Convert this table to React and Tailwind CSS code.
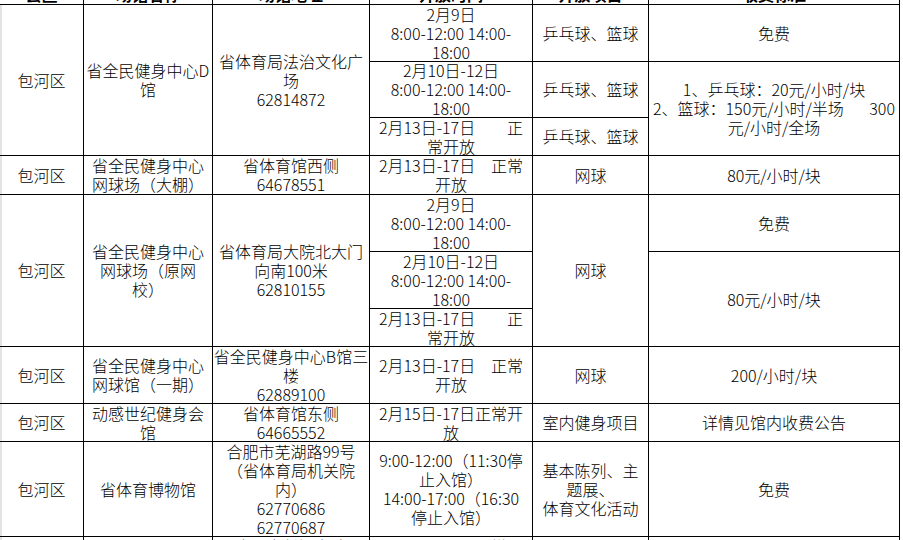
import React from 'react';

const font = { fontFamily: '"Noto Sans CJK SC", "Noto Sans", sans-serif' };

// a line that is pushed to both cell edges (Excel wrapped text with spaces)
const Spread = ({ left, right, pad = 'px-[9px]' }) => (
  <div className={`flex w-full justify-between whitespace-nowrap ${pad}`}>
    <span>{left}</span>
    <span>{right}</span>
  </div>
);

const Cell = ({ className = '', lines = [], top = false }) => (
  <div
    className={`flex flex-col items-center overflow-hidden bg-white text-center text-[16px] font-light leading-[19px] text-black ${
      top ? 'justify-start' : 'justify-center'
    } ${className}`}
  >
    {lines.map((l, i) =>
      typeof l === 'string' ? (
        <div key={i} className="whitespace-pre">
          {l}
        </div>
      ) : (
        <React.Fragment key={i}>{l}</React.Fragment>
      )
    )}
  </div>
);

const T1 = ['2月9日', '8:00-12:00 14:00-', '18:00'];
const T2 = ['2月10日-12日', '8:00-12:00 14:00-', '18:00'];
const T3 = [<Spread left="2月13日-17日" right="正" />, '常开放'];
const T4 = [<Spread left="2月13日-17日" right="正常" />, '开放'];

// first column shows the sheet's faint gridline at its left edge
const first = 'col-start-1 shadow-[inset_2px_0_0_#e3e3e3]';

export default function App() {
  return (
    <div className="h-[540px] w-[903px] overflow-hidden bg-white" style={font}>
      <div className="-mt-[20px] grid w-fit grid-cols-[83px_128px_156px_162px_115px_250px] grid-rows-[24px_56px_55px_37px_38px_56px_56px_37px_56px_37px_94px_100px] gap-px bg-black pr-px">
        {/* header, mostly scrolled out of view */}
        {['县区', '场馆名称', '场馆地址', '开放时间', '开放项目', '收费标准'].map((h, i) => (
          <div
            key={h}
            className="row-start-1 flex items-end justify-center bg-white text-[16px] font-bold leading-[19px] text-black"
            style={{ gridColumnStart: i + 1 }}
          >
            {h}
          </div>
        ))}

        {/* 省全民健身中心D馆 */}
        <Cell className={`${first} row-start-2 row-span-3`} lines={['包河区']} />
        <Cell className="col-start-2 row-start-2 row-span-3" lines={['省全民健身中心D', '馆']} />
        <Cell className="col-start-3 row-start-2 row-span-3" lines={['省体育局法治文化广', '场', '62814872']} />
        <Cell className="col-start-4 row-start-2" lines={T1} />
        <Cell className="col-start-4 row-start-3" lines={T2} />
        <Cell className="col-start-4 row-start-4" lines={T3} />
        <Cell className="col-start-5 row-start-2" lines={['乒乓球、篮球']} />
        <Cell className="col-start-5 row-start-3" lines={['乒乓球、篮球']} />
        <Cell className="col-start-5 row-start-4" lines={['乒乓球、篮球']} />
        <Cell className="col-start-6 row-start-2" lines={['免费']} />
        <Cell
          className="col-start-6 row-start-3 row-span-2"
          lines={['1、乒乓球：20元/小时/块', <Spread left="2、篮球：150元/小时/半场" right="300" pad="px-[4px]" />, '元/小时/全场']}
        />

        {/* 网球场（大棚） */}
        <Cell className={`${first} row-start-5`} lines={['包河区']} />
        <Cell className="col-start-2 row-start-5" lines={['省全民健身中心', '网球场（大棚）']} />
        <Cell className="col-start-3 row-start-5" lines={['省体育馆西侧', '64678551']} />
        <Cell className="col-start-4 row-start-5" lines={T4} />
        <Cell className="col-start-5 row-start-5" lines={['网球']} />
        <Cell className="col-start-6 row-start-5" lines={['80元/小时/块']} />

        {/* 网球场（原网校） */}
        <Cell className={`${first} row-start-6 row-span-3`} lines={['包河区']} />
        <Cell className="col-start-2 row-start-6 row-span-3" lines={['省全民健身中心', '网球场（原网', '校）']} />
        <Cell className="col-start-3 row-start-6 row-span-3" lines={['省体育局大院北大门', '向南100米', '62810155']} />
        <Cell className="col-start-4 row-start-6" lines={T1} />
        <Cell className="col-start-4 row-start-7" lines={T2} />
        <Cell className="col-start-4 row-start-8" lines={T3} />
        <Cell className="col-start-5 row-start-6 row-span-3" lines={['网球']} />
        <Cell className="col-start-6 row-start-6" lines={['免费']} />
        <Cell className="col-start-6 row-start-7 row-span-2" lines={['80元/小时/块']} />

        {/* 网球馆（一期） */}
        <Cell className={`${first} row-start-9`} lines={['包河区']} />
        <Cell className="col-start-2 row-start-9" lines={['省全民健身中心', '网球馆（一期）']} />
        <Cell className="col-start-3 row-start-9" lines={['省全民健身中心B馆三', '楼', '62889100']} />
        <Cell className="col-start-4 row-start-9" lines={T4} />
        <Cell className="col-start-5 row-start-9" lines={['网球']} />
        <Cell className="col-start-6 row-start-9" lines={['200/小时/块']} />

        {/* 动感世纪 */}
        <Cell className={`${first} row-start-10`} lines={['包河区']} />
        <Cell className="col-start-2 row-start-10" lines={['动感世纪健身会', '馆']} />
        <Cell className="col-start-3 row-start-10" lines={['省体育馆东侧', '64665552']} />
        <Cell className="col-start-4 row-start-10" lines={['2月15日-17日正常开', '放']} />
        <Cell className="col-start-5 row-start-10" lines={['室内健身项目']} />
        <Cell className="col-start-6 row-start-10" lines={['详情见馆内收费公告']} />

        {/* 省体育博物馆 */}
        <Cell className={`${first} row-start-11`} lines={['包河区']} />
        <Cell className="col-start-2 row-start-11" lines={['省体育博物馆']} />
        <Cell
          className="col-start-3 row-start-11"
          lines={['合肥市芜湖路99号', '（省体育局机关院', '内）', '62770686', '62770687']}
        />
        <Cell
          className="col-start-4 row-start-11"
          lines={['9:00-12:00（11:30停', '止入馆）', '14:00-17:00（16:30', '停止入馆）']}
        />
        <Cell className="col-start-5 row-start-11" lines={['基本陈列、主', '题展、', '体育文化活动']} />
        <Cell className="col-start-6 row-start-11" lines={['免费']} />

        {/* next row, only its top edge shows */}
        <Cell className={`${first} row-start-12`} lines={['包河区']} />
        <Cell className="col-start-2 row-start-12" lines={['省体育中心']} />
        <Cell className="col-start-3 row-start-12" top lines={['合肥市长江东路', '省体育中心内', '62810000']} />
        <Cell className="col-start-4 row-start-12" top lines={['2月13日-17日正常开', '放']} />
        <Cell className="col-start-5 row-start-12" lines={['游泳']} />
        <Cell className="col-start-6 row-start-12" lines={['30元/人/次']} />
      </div>
    </div>
  );
}
